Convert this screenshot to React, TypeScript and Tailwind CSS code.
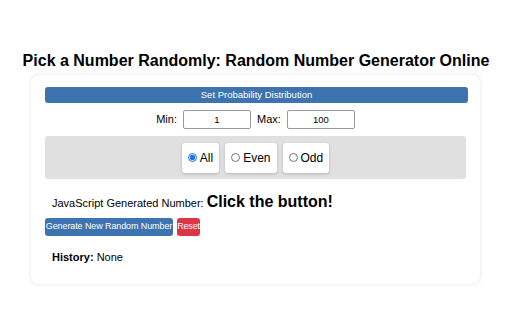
import { useState } from 'react';

export default function App() {
  const [mode, setMode] = useState('all');
  const [min, setMin] = useState('1');
  const [max, setMax] = useState('100');
  const [result, setResult] = useState<number | null>(null);
  const [history, setHistory] = useState<number[]>([]);

  const generate = () => {
    const lo = parseInt(min) || 0;
    const hi = parseInt(max) || 0;
    let n = Math.floor(Math.random() * (hi - lo + 1)) + lo;
    if (mode === 'even' && n % 2 !== 0) n = n + 1 > hi ? n - 1 : n + 1;
    if (mode === 'odd' && n % 2 === 0) n = n + 1 > hi ? n - 1 : n + 1;
    setResult(n);
    setHistory([...history, n]);
  };

  const reset = () => {
    setResult(null);
    setHistory([]);
  };

  const options = [
    { id: 'all', label: 'All' },
    { id: 'even', label: 'Even' },
    { id: 'odd', label: 'Odd' },
  ];

  return (
    <div className="w-[512px] h-[320px] bg-white text-black font-['Liberation_Sans',Arial,sans-serif] overflow-hidden">
      <h1 className="pt-[52px] text-center text-[16px] leading-[18px] font-bold">
        Pick a Number Randomly: Random Number Generator Online
      </h1>

      <div className="ml-[31px] mt-[5px] w-[449px] rounded-lg bg-white shadow-[0_0_4px_rgba(0,0,0,0.12)] px-[14px] pt-[12px] pb-[20px]">
        <button className="w-[423px] h-[16px] rounded-[3px] bg-[#3d73af] text-white text-[9.5px] leading-[16px] block">
          Set Probability Distribution
        </button>

        {/* Range inputs */}
        <div className="mt-[7px] flex items-center justify-center text-[11px]">
          <span className="mr-[6px]">Min:</span>
          <input
            value={min}
            onChange={(e) => setMin(e.target.value)}
            className="w-[68px] h-[19px] border border-[#9a9a9a] rounded-[2px] text-center text-[9.5px] outline-none"
          />
          <span className="ml-[6px] mr-[6px]">Max:</span>
          <input
            value={max}
            onChange={(e) => setMax(e.target.value)}
            className="w-[68px] h-[19px] border border-[#9a9a9a] rounded-[2px] text-center text-[9.5px] outline-none"
          />
        </div>

        {/* Distribution options */}
        <div className="mt-[7px] h-[43px] rounded-[3px] bg-[#e0e0e0] flex items-center justify-center gap-[6px]">
          {options.map((o) => (
            <label
              key={o.id}
              className="h-[30px] px-[6px] flex items-center gap-[3px] bg-white rounded-[3px] shadow-[0_1px_3px_rgba(0,0,0,0.2)] text-[12px] cursor-pointer"
            >
              <input
                type="radio"
                name="mode"
                checked={mode === o.id}
                onChange={() => setMode(o.id)}
                className="w-[9px] h-[9px] m-0 accent-[#1a73e8]"
              />
              {o.label}
            </label>
          ))}
        </div>

        <p className="mt-[13px] pl-[7px] flex items-baseline gap-[3px] text-[11px] leading-[20px]">
          JavaScript Generated Number:
          <span className="text-[16px] font-bold">{result === null ? 'Click the button!' : result}</span>
        </p>

        <div className="mt-[5px] flex gap-[4px]">
          <button onClick={generate} className="w-[128px] h-[18px] px-0 rounded-[3px] bg-[#3d73af] text-white text-[9px] tracking-[-0.1px] whitespace-nowrap overflow-visible">
            Generate New Random Number
          </button>
          <button onClick={reset} className="w-[23px] h-[18px] px-0 rounded-[3px] bg-[#dc3545] text-white text-[9px] tracking-[-0.2px] whitespace-nowrap overflow-visible">
            Reset
          </button>
        </div>

        <p className="mt-[14px] pl-[7px] text-[11px] leading-[14px]">
          <span className="font-bold">History:</span> {history.length ? history.join(', ') : 'None'}
        </p>
      </div>
    </div>
  );
}
